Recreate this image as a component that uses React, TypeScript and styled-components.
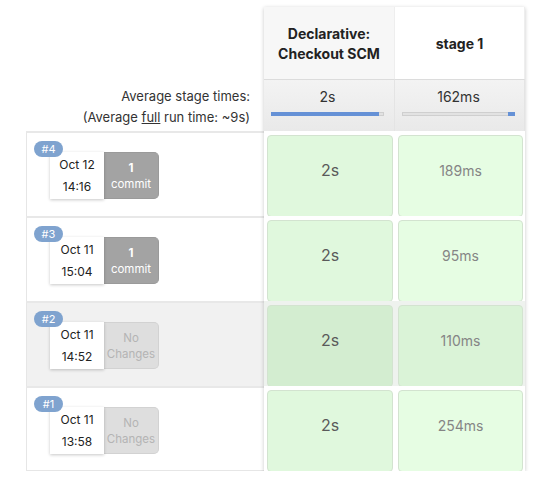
import React from "react";
import styled, { createGlobalStyle } from "styled-components";

const Global = createGlobalStyle`
  html, body { margin: 0; padding: 0; background: #fff; }
  body { font-family: Inter, "Noto Sans", sans-serif; color: #333; }
`;

const Page = styled.div`
  display: flex;
  align-items: flex-start;
  padding: 7px 0 0 26px;
`;

const LeftColumn = styled.div`
  width: 238px;
  display: flex;
  flex-direction: column;
`;

const HeadSpacer = styled.div`
  height: 72px;
`;

const AvgLabel = styled.div`
  height: 52px;
  display: flex;
  flex-direction: column;
  justify-content: center;
  align-items: flex-end;
  padding-right: 14px;
  font-size: 13px;
  line-height: 21px;
  color: #333;
  padding-top: 3px;
  box-sizing: border-box;
  u { text-decoration: underline; }
`;

const RunRow = styled.div<{ $hover?: boolean; $last?: boolean }>`
  height: 85px;
  box-sizing: border-box;
  border-top: 2px solid #e8e8e8;
  border-left: 1px solid #e6e6e6;
  border-bottom: ${(p) => (p.$last ? "1px solid #e6e6e6" : "none")};
  background: ${(p) => (p.$hover ? "#f1f1f1" : "#fff")};
  padding: 19px 0 0 23px;
`;

const RunInfo = styled.div`
  position: relative;
  display: flex;
  width: 109px;
`;

const Badge = styled.span`
  position: absolute;
  left: -16px;
  top: -11px;
  z-index: 2;
  width: 29px;
  height: 16px;
  border-radius: 8px;
  background: #7fa3cf;
  color: #fff;
  font-size: 11px;
  line-height: 16px;
  text-align: center;
`;

const DateBox = styled.div`
  width: 54px;
  height: 47px;
  background: #fff;
  box-shadow: 0 1px 3px rgba(0, 0, 0, 0.22);
  display: flex;
  flex-direction: column;
  justify-content: center;
  align-items: center;
  font-size: 12px;
  line-height: 22px;
  color: #222;
  position: relative;
  z-index: 1;
`;

const Changes = styled.div<{ $none?: boolean }>`
  width: 55px;
  height: 47px;
  box-sizing: border-box;
  border-radius: 0 5px 5px 0;
  background: ${(p) => (p.$none ? "#dedede" : "#a3a3a3")};
  border: 1px solid ${(p) => (p.$none ? "#d2d2d2" : "#9a9a9a")};
  border-left: none;
  color: ${(p) => (p.$none ? "#b4b4b4" : "#fff")};
  display: flex;
  flex-direction: column;
  justify-content: center;
  align-items: center;
  font-size: 11.5px;
  line-height: 16px;
  b { font-weight: 700; }
`;

const StageTable = styled.div`
  width: 261px;
  box-shadow: 0 1px 4px rgba(0, 0, 0, 0.22);
  background: #fff;
`;

const Grid = styled.div`
  display: grid;
  grid-template-columns: 131px 130px;
`;

const HeadCell = styled.div<{ $alt?: boolean }>`
  height: 72px;
  box-sizing: border-box;
  background: ${(p) => (p.$alt ? "#f7f7f7" : "#fff")};
  border-right: 1px solid #eee;
  display: flex;
  align-items: center;
  justify-content: center;
  text-align: center;
  font-weight: 700;
  font-size: 14px;
  line-height: 20px;
  color: #222;
  padding: 2px 6px 0;
`;

const AvgCell = styled.div`
  height: 52px;
  box-sizing: border-box;
  border-top: 1px solid #dcdcdc;
  border-right: 1px solid #e4e4e4;
  background: linear-gradient(#f3f3f3, #e9e9e9);
  padding: 8px 0 0 7px;
  font-size: 14px;
  line-height: 18px;
  color: #333;
  display: flex;
  flex-direction: column;
  align-items: flex-start;
`;

const AvgText = styled.div`
  width: 113px;
  text-align: center;
`;

const Bar = styled.div`
  margin-top: 6px;
  width: 113px;
  height: 4px;
  box-sizing: border-box;
  background: #e2e2e2;
  border: 1px solid #cfcfcf;
  display: flex;
`;

const BarFill = styled.div<{ $right?: boolean }>`
  height: 4px;
  margin-top: -1px;
  background: #6591d6;
  margin-left: ${(p) => (p.$right ? "auto" : "-1px")};
  margin-right: ${(p) => (p.$right ? "-1px" : "0")};
`;

const StageRowCell = styled.div<{ $hover?: boolean }>`
  height: 85px;
  box-sizing: border-box;
  padding: 4px 2px 0 3px;
  background: ${(p) => (p.$hover ? "#eef2ee" : "#fff")};
`;

const StageBox = styled.div<{ $col: number; $hover?: boolean }>`
  height: 82px;
  box-sizing: border-box;
  border-radius: 4px;
  border: 1px solid #d3e3d0;
  background: ${(p) =>
    p.$hover
      ? p.$col === 0
        ? "#d3edd0"
        : "#daf3d7"
      : p.$col === 0
      ? "#e0f8dd"
      : "#e6fde3"};
  text-align: center;
  padding-top: ${(p) => (p.$col === 0 ? "24px" : "25px")};
  font-size: ${(p) => (p.$col === 0 ? "16px" : "14px")};
  line-height: 20px;
  color: ${(p) => (p.$col === 0 ? "#5a5a5a" : "#858585")};
`;

type Run = {
  id: number;
  date: string;
  time: string;
  commits: number;
  times: string[];
};

const runs: Run[] = [
  { id: 4, date: "Oct 12", time: "14:16", commits: 1, times: ["2s", "189ms"] },
  { id: 3, date: "Oct 11", time: "15:04", commits: 1, times: ["2s", "95ms"] },
  { id: 2, date: "Oct 11", time: "14:52", commits: 0, times: ["2s", "110ms"] },
  { id: 1, date: "Oct 11", time: "13:58", commits: 0, times: ["2s", "254ms"] },
];

const HOVER_ID = 2;

export default function App() {
  return (
    <>
      <Global />
      <Page>
        <LeftColumn>
          <HeadSpacer />
          <AvgLabel>
            <div>Average stage times:</div>
            <div>
              (Average <u>full</u> run time: ~9s)
            </div>
          </AvgLabel>
          {runs.map((r, i) => (
            <RunRow key={r.id} $hover={r.id === HOVER_ID} $last={i === runs.length - 1}>
              <RunInfo>
                <Badge>#{r.id}</Badge>
                <DateBox>
                  <div>{r.date}</div>
                  <div>{r.time}</div>
                </DateBox>
                {r.commits > 0 ? (
                  <Changes>
                    <b>{r.commits}</b>
                    <div>commit</div>
                  </Changes>
                ) : (
                  <Changes $none>
                    <div>No</div>
                    <div>Changes</div>
                  </Changes>
                )}
              </RunInfo>
            </RunRow>
          ))}
        </LeftColumn>
        <StageTable>
          <Grid>
            <HeadCell $alt>
              Declarative:
              <br />
              Checkout SCM
            </HeadCell>
            <HeadCell>stage 1</HeadCell>
            <AvgCell>
              <AvgText>2s</AvgText>
              <Bar>
                <BarFill style={{ width: "108px" }} />
              </Bar>
            </AvgCell>
            <AvgCell>
              <AvgText>162ms</AvgText>
              <Bar>
                <BarFill $right style={{ width: "7px" }} />
              </Bar>
            </AvgCell>
            {runs.map((r) =>
              r.times.map((t, c) => (
                <StageRowCell key={`${r.id}-${c}`} $hover={r.id === HOVER_ID}>
                  <StageBox $col={c} $hover={r.id === HOVER_ID}>
                    {t}
                  </StageBox>
                </StageRowCell>
              ))
            )}
          </Grid>
        </StageTable>
      </Page>
    </>
  );
}
